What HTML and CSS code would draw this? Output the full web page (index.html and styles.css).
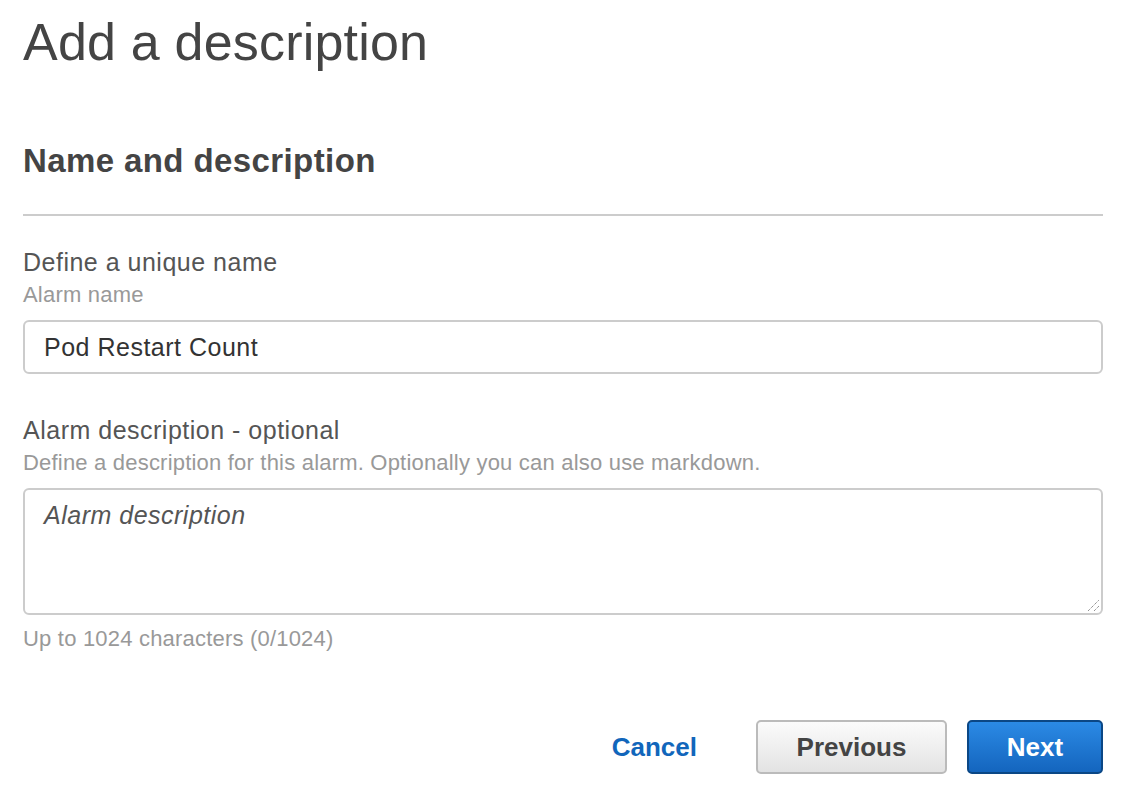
FILE: index.html
```html
<!DOCTYPE html>
<html>
<head>
<meta charset="utf-8">
<link rel="stylesheet" href="styles.css">
</head>
<body>
<div class="page">
  <h1 class="title">Add a description</h1>
  <section class="panel">
    <h2 class="panel-title">Name and description</h2>
    <div class="panel-body">
      <div class="field">
        <div class="label">Define a unique name</div>
        <div class="hint">Alarm name</div>
        <div class="input">Pod Restart Count</div>
      </div>
      <div class="field field-desc">
        <div class="label">Alarm description - optional</div>
        <div class="hint">Define a description for this alarm. Optionally you can also use markdown.</div>
        <div class="textarea">
          <span class="placeholder">Alarm description</span>
          <svg class="grip" width="14" height="14" viewBox="0 0 14 14"><path d="M2 13 L13 2 M8 13 L13 8" stroke="#666" stroke-width="1" stroke-dasharray="1 1" fill="none"/></svg>
        </div>
        <div class="counter">Up to 1024 characters (0/1024)</div>
      </div>
    </div>
  </section>
  <div class="actions">
    <a class="btn-link">Cancel</a>
    <button class="btn btn-secondary">Previous</button>
    <button class="btn btn-primary">Next</button>
  </div>
</div>
</body>
</html>
```
FILE: styles.css
```css
html, body {
  margin: 0;
  padding: 0;
  background: #fff;
}
body {
  font-family: "Liberation Sans", Arial, sans-serif;
  color: #444;
}
.page {
  padding: 0 19px 0 23px;
}
.title {
  margin: 0;
  padding-top: 12px;
  font-size: 52px;
  font-weight: normal;
  line-height: 60px;
  letter-spacing: 0.2px;
  color: #444;
}
.panel {
  margin-top: 69px;
}
.panel-title {
  margin: 0;
  font-size: 33px;
  font-weight: bold;
  line-height: 40px;
  letter-spacing: 0.4px;
  color: #444;
  padding-bottom: 33px;
  border-bottom: 2px solid #ccc;
}
.panel-body {
  padding-top: 31px;
}
.label {
  font-size: 25px;
  line-height: 30px;
  letter-spacing: 0.5px;
  color: #555;
}
.hint {
  margin-top: 3px;
  font-size: 22px;
  line-height: 30px;
  letter-spacing: 0.2px;
  color: #999;
}
.input {
  margin-top: 10px;
  height: 50px;
  border: 2px solid #ccc;
  border-radius: 6px;
  padding: 0 19px;
  font-size: 25px;
  letter-spacing: 0.5px;
  line-height: 50px;
  color: #333;
}
.field-desc {
  margin-top: 41px;
}
.textarea {
  position: relative;
  margin-top: 10px;
  border: 2px solid #ccc;
  border-radius: 6px;
  padding: 9px 19px;
  box-sizing: border-box;
  height: 127px;
  font-size: 25px;
  letter-spacing: 0.5px;
  line-height: 32px;
}
.placeholder {
  font-style: italic;
  color: #555;
}
.grip {
  position: absolute;
  right: 1px;
  bottom: 1px;
}
.counter {
  margin-top: 9px;
  font-size: 22px;
  line-height: 30px;
  letter-spacing: 0.2px;
  color: #999;
}
.actions {
  margin-top: 66px;
  display: flex;
  justify-content: flex-end;
  align-items: center;
  gap: 20px;
}
.btn-link {
  font-size: 26px;
  font-weight: bold;
  color: #1166bb;
  margin-right: 39px;
}
.btn {
  height: 54px;
  border-radius: 5px;
  font-family: "Liberation Sans", Arial, sans-serif;
  font-size: 26px;
  font-weight: bold;
  padding: 0;
}
.btn-secondary {
  width: 191px;
  background: linear-gradient(#fbfbfb, #e3e3e3);
  border: 2px solid #bbb;
  color: #444;
}
.btn-primary {
  width: 136px;
  background: linear-gradient(#2b8ae5, #1465be);
  border: 2px solid #0b4785;
  color: #fff;
}
```
